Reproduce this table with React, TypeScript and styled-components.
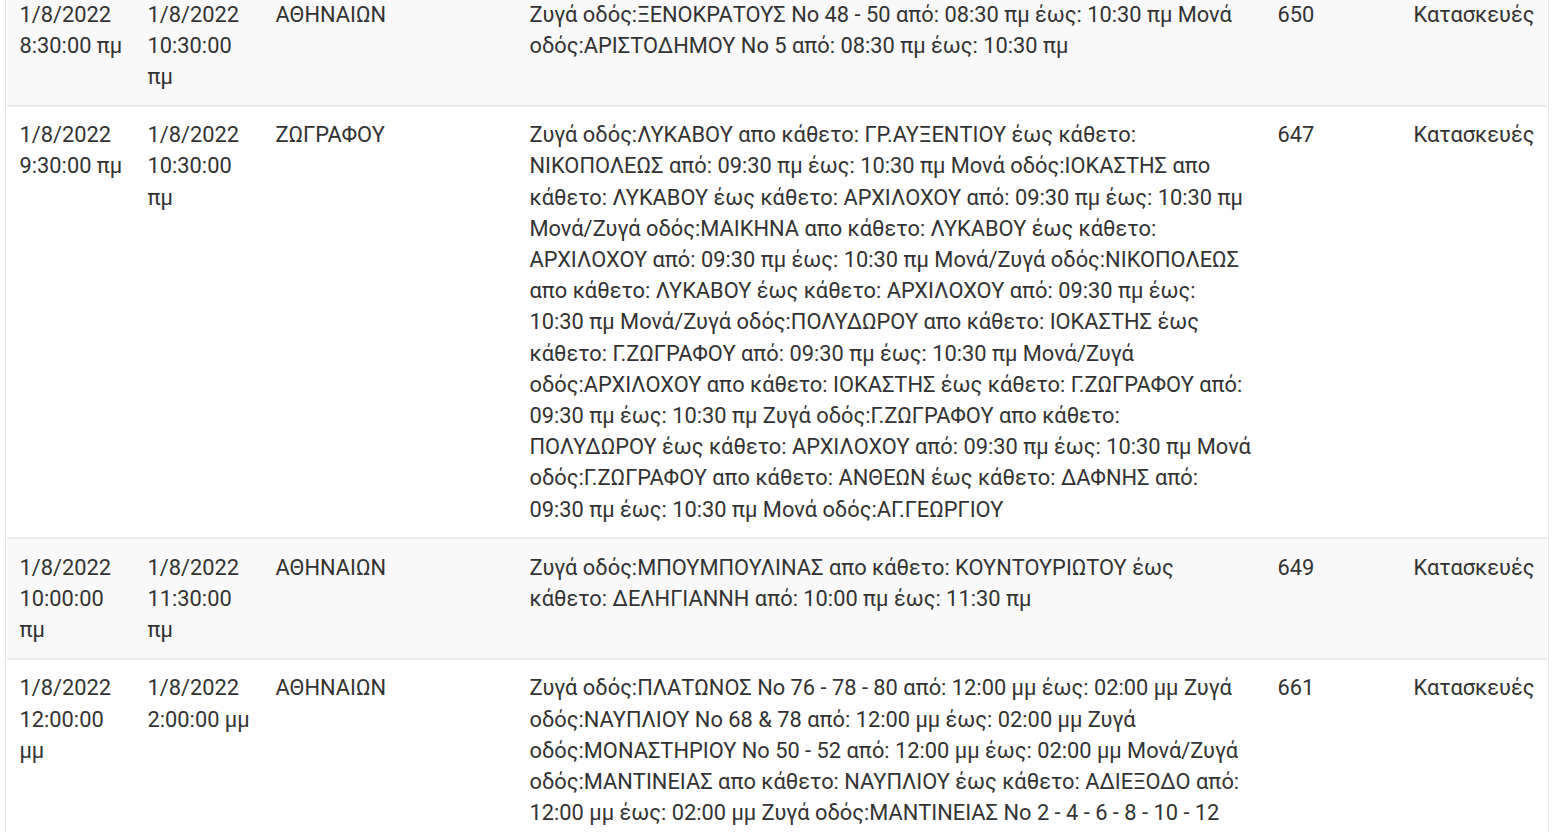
import React from "react";
import styled, { createGlobalStyle } from "styled-components";

const Global = createGlobalStyle`
  html, body { margin: 0; padding: 0; overflow: hidden; background: #fff; }
  body { font-family: Roboto, "Noto Sans", sans-serif; color: #333; }
`;

const Page = styled.div`
  padding-left: 5px;
  height: 832px;
  overflow: hidden;
`;

const Frame = styled.div`
  width: 1540px;
  padding: 0 1px;
  border-left: 1px solid #e8e8e8;
  border-right: 1px solid #e8e8e8;
  margin-top: -16px;
`;

const Table = styled.table`
  width: 1540px;
  table-layout: fixed;
  border-collapse: collapse;
  border-spacing: 0;
  font-size: 21.84px;
  line-height: 31.2px;
`;

const Row = styled.tr<{ $striped: boolean }>`
  background: ${(p) => (p.$striped ? "#f9f9f9" : "#fff")};
`;

const Cell = styled.td`
  padding: 12.5px;
  vertical-align: top;
  overflow: hidden;
  white-space: normal;
  word-wrap: break-word;
  border-top: 2px solid #ebebeb;
`;

const DescCell = styled(Cell)`
  padding-right: 14px;
`;

const cols = [128, 128, 254, 748, 136, 146];

type R = { from: string; to: string; area: string; desc: string; id: string; kind: string };

const rows: R[] = [
  {
    from: "1/8/2022 8:30:00 πμ",
    to: "1/8/2022 10:30:00 πμ",
    area: "ΑΘΗΝΑΙΩΝ",
    desc: "Ζυγά οδός:ΞΕΝΟΚΡΑΤΟΥΣ No 48 - 50 από: 08:30 πμ έως: 10:30 πμ Μονά οδός:ΑΡΙΣΤΟΔΗΜΟΥ No 5 από: 08:30 πμ έως: 10:30 πμ",
    id: "650",
    kind: "Κατασκευές",
  },
  {
    from: "1/8/2022 9:30:00 πμ",
    to: "1/8/2022 10:30:00 πμ",
    area: "ΖΩΓΡΑΦΟΥ",
    desc: "Ζυγά οδός:ΛΥΚΑΒΟΥ απο κάθετο: ΓΡ.ΑΥΞΕΝΤΙΟΥ έως κάθετο: ΝΙΚΟΠΟΛΕΩΣ από: 09:30 πμ έως: 10:30 πμ Μονά οδός:ΙΟΚΑΣΤΗΣ απο κάθετο: ΛΥΚΑΒΟΥ έως κάθετο: ΑΡΧΙΛΟΧΟΥ από: 09:30 πμ έως: 10:30 πμ Μονά/Ζυγά οδός:ΜΑΙΚΗΝΑ απο κάθετο: ΛΥΚΑΒΟΥ έως κάθετο: ΑΡΧΙΛΟΧΟΥ από: 09:30 πμ έως: 10:30 πμ Μονά/Ζυγά οδός:ΝΙΚΟΠΟΛΕΩΣ απο κάθετο: ΛΥΚΑΒΟΥ έως κάθετο: ΑΡΧΙΛΟΧΟΥ από: 09:30 πμ έως: 10:30 πμ Μονά/Ζυγά οδός:ΠΟΛΥΔΩΡΟΥ απο κάθετο: ΙΟΚΑΣΤΗΣ έως κάθετο: Γ.ΖΩΓΡΑΦΟΥ από: 09:30 πμ έως: 10:30 πμ Μονά/Ζυγά οδός:ΑΡΧΙΛΟΧΟΥ απο κάθετο: ΙΟΚΑΣΤΗΣ έως κάθετο: Γ.ΖΩΓΡΑΦΟΥ από: 09:30 πμ έως: 10:30 πμ Ζυγά οδός:Γ.ΖΩΓΡΑΦΟΥ απο κάθετο: ΠΟΛΥΔΩΡΟΥ έως κάθετο: ΑΡΧΙΛΟΧΟΥ από: 09:30 πμ έως: 10:30 πμ Μονά οδός:Γ.ΖΩΓΡΑΦΟΥ απο κάθετο: ΑΝΘΕΩΝ έως κάθετο: ΔΑΦΝΗΣ από: 09:30 πμ έως: 10:30 πμ Μονά οδός:ΑΓ.ΓΕΩΡΓΙΟΥ",
    id: "647",
    kind: "Κατασκευές",
  },
  {
    from: "1/8/2022 10:00:00 πμ",
    to: "1/8/2022 11:30:00 πμ",
    area: "ΑΘΗΝΑΙΩΝ",
    desc: "Ζυγά οδός:ΜΠΟΥΜΠΟΥΛΙΝΑΣ απο κάθετο: ΚΟΥΝΤΟΥΡΙΩΤΟΥ έως κάθετο: ΔΕΛΗΓΙΑΝΝΗ από: 10:00 πμ έως: 11:30 πμ",
    id: "649",
    kind: "Κατασκευές",
  },
  {
    from: "1/8/2022 12:00:00 μμ",
    to: "1/8/2022 2:00:00 μμ",
    area: "ΑΘΗΝΑΙΩΝ",
    desc: "Ζυγά οδός:ΠΛΑΤΩΝΟΣ No 76 - 78 - 80 από: 12:00 μμ έως: 02:00 μμ Ζυγά οδός:ΝΑΥΠΛΙΟΥ No 68 & 78 από: 12:00 μμ έως: 02:00 μμ Ζυγά οδός:ΜΟΝΑΣΤΗΡΙΟΥ No 50 - 52 από: 12:00 μμ έως: 02:00 μμ Μονά/Ζυγά οδός:ΜΑΝΤΙΝΕΙΑΣ απο κάθετο: ΝΑΥΠΛΙΟΥ έως κάθετο: ΑΔΙΕΞΟΔΟ από: 12:00 μμ έως: 02:00 μμ Ζυγά οδός:ΜΑΝΤΙΝΕΙΑΣ No 2 - 4 - 6 - 8 - 10 - 12 από: 12:00 μμ έως: 02:00 μμ",
    id: "661",
    kind: "Κατασκευές",
  },
];

export default function App() {
  return (
    <Page>
      <Global />
      <Frame>
        <Table>
          <colgroup>
            {cols.map((w, i) => (
              <col key={i} style={{ width: w }} />
            ))}
          </colgroup>
          <tbody>
            {rows.map((r, i) => (
              <Row key={i} $striped={i % 2 === 0}>
                <Cell>{r.from}</Cell>
                <Cell>{r.to}</Cell>
                <Cell>{r.area}</Cell>
                <DescCell>{r.desc}</DescCell>
                <Cell>{r.id}</Cell>
                <Cell>{r.kind}</Cell>
              </Row>
            ))}
          </tbody>
        </Table>
      </Frame>
    </Page>
  );
}
